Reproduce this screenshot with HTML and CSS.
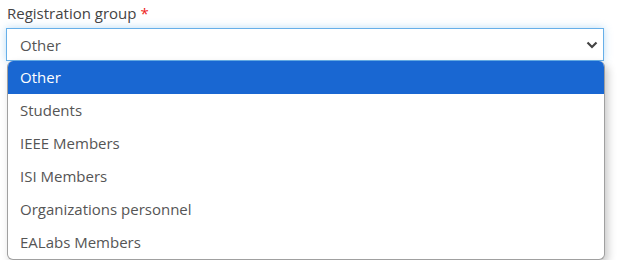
FILE: index.html
```html
<!DOCTYPE html>
<html lang="en">
<head>
<meta charset="UTF-8">
<meta name="viewport" content="width=device-width, initial-scale=1.0">
<title>Registration group</title>

<link rel="stylesheet" href="styles.css">

</head>
<body>
    <div class="form-group">
        <label class="field-label">Registration group <span class="required">*</span></label>
        <div class="select-box">
            <span class="select-value">Other</span>
            <svg class="select-arrow" width="12" height="8" viewBox="0 0 12 8">
                <path d="M1.5 1.5 L6 6 L10.5 1.5" fill="none" stroke="#444" stroke-width="2.2"/>
            </svg>
        </div>
        <div class="dropdown">
            <div class="item active">Other</div>
            <div class="item">Students</div>
            <div class="item">IEEE Members</div>
            <div class="item">ISI Members</div>
            <div class="item">Organizations personnel</div>
            <div class="item">EALabs Members</div>
        </div>
    </div>
</body>
</html>
```

FILE: styles.css
```css
body {
    margin: 0;
    font-family: "Open Sans", Arial, sans-serif;
    background-color: #fff;
}

.form-group {
    padding: 3px 14px 0 6px;
}

.field-label {
    display: block;
    font-size: 15px;
    line-height: 20px;
    color: #444;
    padding-left: 1px;
    margin-bottom: 5px;
}

.required {
    color: #e22;
}

.select-box {
    display: flex;
    align-items: center;
    justify-content: space-between;
    height: 31px;
    border: 1px solid #66afe9;
    box-shadow: 0 0 8px rgba(102, 175, 233, 0.45);
    background: #fff;
    padding: 0 5px 0 13px;
    font-size: 15px;
    color: #555;
}

.dropdown {
    margin: 0 -1px 0 1px;
    background: #fff;
    border: 1px solid #a0a0a0;
    border-top: none;
    border-radius: 6px;
    overflow: hidden;
    box-shadow: 3px 4px 8px rgba(0, 0, 0, 0.22);
}

.item {
    height: 33px;
    line-height: 33px;
    padding-left: 12px;
    font-size: 15px;
    color: #555;
}

.item.active {
    background-color: #1967d2;
    color: #fff;
}
```
